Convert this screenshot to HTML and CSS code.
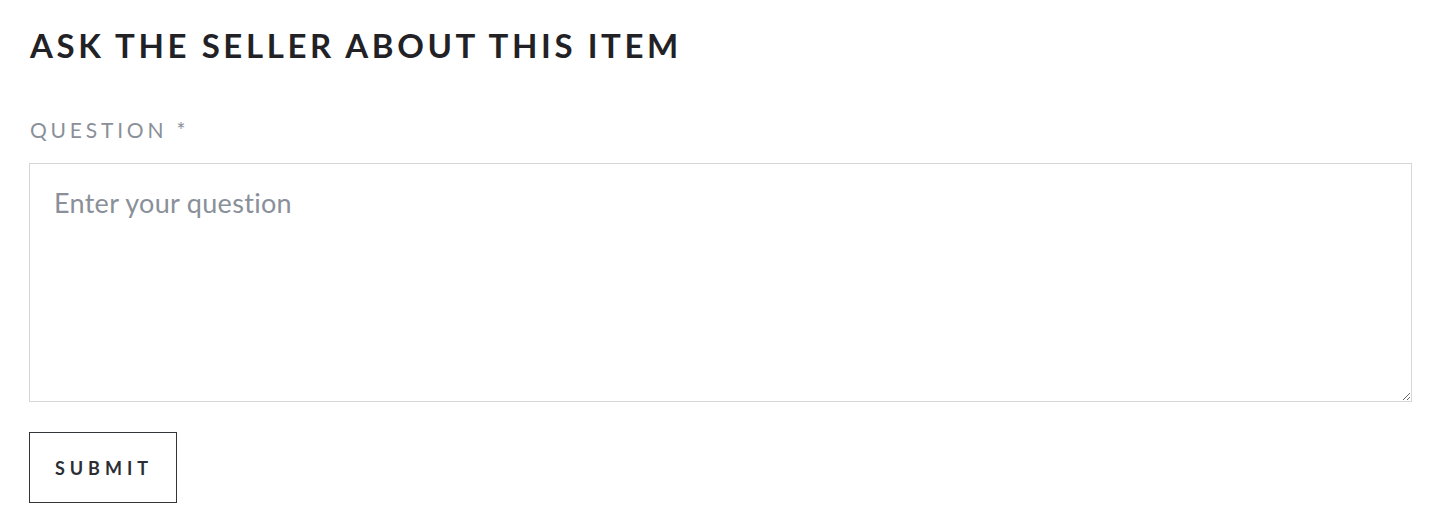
FILE: index.html
```html
<!DOCTYPE html>
<html>
<head>
<meta charset="utf-8">
<link rel="stylesheet" href="styles.css">
</head>
<body>
<div class="page">
  <h2 class="title">ASK THE SELLER ABOUT THIS ITEM</h2>
  <form class="form">
    <label class="label" for="q">QUESTION *</label>
    <textarea id="q" class="input" placeholder="Enter your question"></textarea>
    <button type="button" class="submit">SUBMIT</button>
  </form>
</div>
</body>
</html>
```
FILE: styles.css
```css
html, body {
  margin: 0;
  background: #fff;
}
body {
  font-family: "Lato", "Liberation Sans", sans-serif;
}
.page {
  padding: 25px 31px 0 29px;
}
.title {
  margin: 0 0 0 1px;
  font-size: 33px;
  line-height: 40px;
  font-weight: 700;
  letter-spacing: 3.6px;
  color: #222226;
}
.form {
  display: flex;
  flex-direction: column;
  align-items: flex-start;
}
.label {
  margin: 52px 0 0 1px;
  font-size: 21px;
  line-height: 26px;
  letter-spacing: 3.8px;
  color: #8a9099;
}
.input {
  box-sizing: border-box;
  margin-top: 20px;
  width: 100%;
  height: 239px;
  border: 1px solid #d5d6da;
  padding: 23px 24px;
  font-family: inherit;
  font-size: 27px;
  line-height: 32px;
  letter-spacing: 0.3px;
  color: #333;
  resize: vertical;
  outline: none;
}
.input::placeholder {
  color: #8a9099;
}
.submit {
  box-sizing: border-box;
  margin-top: 30px;
  width: 148px;
  height: 71px;
  border: 1px solid #333639;
  background: #fff;
  font-family: inherit;
  font-size: 18px;
  font-weight: 700;
  letter-spacing: 5px;
  color: #2b2f33;
  padding: 0 0 0 2px;
  cursor: pointer;
}
```
